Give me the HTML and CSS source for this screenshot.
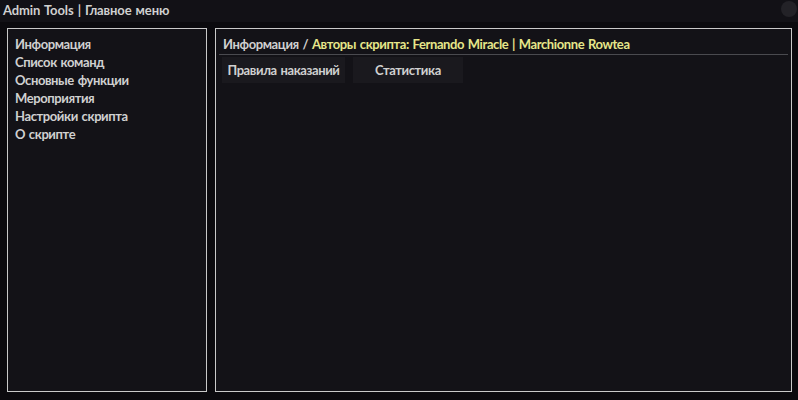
FILE: index.html
```html
<!DOCTYPE html>
<html lang="ru">
<head>
<meta charset="utf-8">
<title>Admin Tools</title>
<link rel="stylesheet" href="styles.css">
</head>
<body>
<div class="window">
  <header class="titlebar">
    <span class="title">Admin Tools | Главное меню</span>
    <span class="close-btn"></span>
  </header>
  <main class="content">
    <nav class="sidebar">
      <div class="menu-item">Информация</div>
      <div class="menu-item">Список команд</div>
      <div class="menu-item">Основные функции</div>
      <div class="menu-item">Мероприятия</div>
      <div class="menu-item">Настройки скрипта</div>
      <div class="menu-item">О скрипте</div>
    </nav>
    <section class="panel">
      <div class="panel-header">Информация / <span class="accent">Авторы скрипта: Fernando Miracle | Marchionne Rowtea</span></div>
      <div class="separator"></div>
      <div class="tabs">
        <div class="tab tab-first">Правила наказаний</div>
        <div class="tab tab-second">Статистика</div>
      </div>
    </section>
  </main>
</div>
</body>
</html>
```
FILE: styles.css
```css
html, body {
  margin: 0;
  padding: 0;
}
body {
  width: 798px;
  height: 400px;
  background: #0b0a0e;
  font-family: "Lato", "Noto Sans", sans-serif;
  font-weight: 700;
  font-size: 13px;
  color: #d0d0d0;
  overflow: hidden;
}
.window {
  display: flex;
  flex-direction: column;
  height: 400px;
}
.titlebar {
  height: 22px;
  background: #121116;
  display: flex;
  align-items: center;
  justify-content: space-between;
  padding: 0 1px 0 3px;
}
.title {
  line-height: 22px;
  position: relative;
  top: -1px;
  word-spacing: 1px;
  letter-spacing: -0.1px;
}
.close-btn {
  width: 16px;
  height: 16px;
  border-radius: 50%;
  background: #232227;
  position: relative;
  top: -2px;
}
.content {
  display: flex;
  gap: 8px;
  padding: 6px 6px 8px 7px;
  flex: 1;
  letter-spacing: -0.4px;
  word-spacing: 1px;
}
.sidebar {
  border: 1px solid #c9c9c9;
  background: #131217;
  padding: 6px 7px;
  box-sizing: border-box;
  width: 200px;
}
.menu-item {
  line-height: 18px;
  white-space: nowrap;
}
.panel {
  flex: 1;
  border: 1px solid #c9c9c9;
  background: #131217;
  padding: 6px 3px 0 3px;
}
.panel-header {
  line-height: 18px;
  padding-left: 4px;
  white-space: nowrap;
}
.accent {
  color: #e6e68a;
}
.separator {
  height: 1px;
  background: #4a4a4f;
  margin-top: 1px;
}
.tabs {
  display: flex;
  gap: 8px;
  margin-top: 2px;
  padding-left: 3px;
}
.tab {
  height: 26px;
  line-height: 26px;
  background: #1a191e;
  text-align: center;
  white-space: nowrap;
}
.tab-first {
  width: 123px;
}
.tab-second {
  width: 110px;
}
```
